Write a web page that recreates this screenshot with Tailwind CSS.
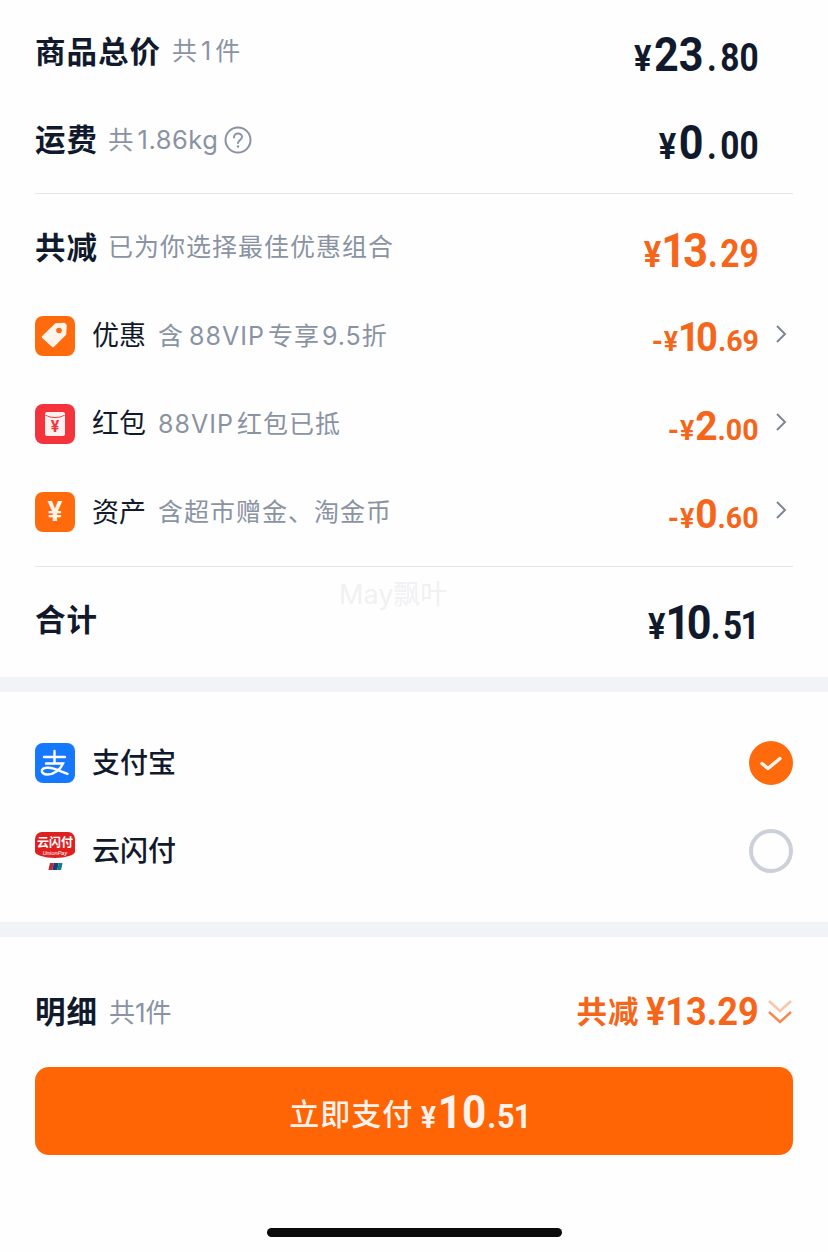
<!DOCTYPE html>
<html lang="zh">
<head>
<meta charset="utf-8">
<script src="https://cdn.jsdelivr.net/npm/@tailwindcss/browser@4"></script>
</head>
<body class="m-0 bg-[#fefefe]">
<div class="relative w-[828px] h-[1252px] overflow-hidden bg-[#fefefe] text-[#111a2c] font-['Inter','Noto_Sans_CJK_SC',sans-serif]">
  <div class="pt-2 px-[35px]">
    <div class="h-[88px] flex items-center justify-between">
      <div class="flex items-center"><span class="text-[30.5px] font-semibold tracking-[1px]">商品总价</span><span class="ml-[11px] text-[25px] text-[#8a93a3]">共<span class="mx-[4px]">1</span>件</span></div>
      <div class="pr-[34px] pt-[5px]"><div class="origin-right scale-x-[0.88] flex items-baseline font-['Roboto',sans-serif] font-bold leading-none"><span class="text-[37px] mr-[3px]">¥</span><span class="text-[49px]">23</span><span class="text-[38px] mx-1">.</span><span class="text-[38px]">80</span></div></div>
    </div>
    <div class="h-[88px] flex items-center justify-between">
      <div class="flex items-center"><span class="text-[30.5px] font-semibold tracking-[1px]">运费</span><span class="ml-[10px] text-[25.5px] text-[#8a93a3]">共<span class="ml-[4px] tracking-[0.5px]">1.86kg</span></span>
        <svg class="ml-[6px]" width="28" height="28" viewBox="0 0 28 28" fill="none" stroke="#8a93a3" stroke-width="2"><circle cx="14" cy="14" r="12.5"/><path d="M10 11.500c0-2.400 1.800-4 4-4s4 1.500 4 3.600c0 2.800-4 3-4 6" stroke-linecap="round"/><circle cx="14" cy="20.500" r="1.200" fill="#8a93a3" stroke="none"/></svg>
      </div>
      <div class="pr-[34px] pt-[5px]"><div class="origin-right scale-x-[0.88] flex items-baseline font-['Roboto',sans-serif] font-bold leading-none"><span class="text-[37px] mr-[3px]">¥</span><span class="text-[49px]">0</span><span class="text-[38px] mx-1">.</span><span class="text-[38px]">00</span></div></div>
    </div>
    <div class="mt-[9px] h-px bg-[#e4e6ea]"></div>
    <div class="mt-[10px] h-[88px] flex items-center justify-between">
      <div class="flex items-center"><span class="text-[30.5px] font-semibold tracking-[1px]">共减</span><span class="ml-[10px] text-[25px] tracking-[1px] text-[#8a93a3]">已为你选择最佳优惠组合</span></div>
      <div class="pr-[34px] pt-[5px]"><div class="origin-right scale-x-[0.88] flex items-baseline font-['Roboto',sans-serif] font-bold leading-none text-[#f5661a]"><span class="text-[37px]">¥</span><span class="text-[49px] tracking-[-3px]">13</span><span class="text-[38px] mx-[3px]">.</span><span class="text-[38px]">29</span></div></div>
    </div>

    <div class="h-[88px] flex items-center justify-between">
      <div class="flex items-center">
        <div class="w-10 h-10 rounded-lg bg-[#ff6a0c]">
          <svg width="40" height="40" viewBox="0 0 40 40"><path d="M21 8.500l8-.5 1.500 1.500-.5 8.500L18 30 8 21z" fill="#fff4ec" stroke="#fff4ec" stroke-width="2.500" stroke-linejoin="round"/><circle cx="24" cy="14.500" r="2.800" fill="#ff6a0c"/></svg>
        </div>
        <span class="ml-[17px] pt-[1px] text-[27px]">优惠</span><span class="ml-3 pt-[1px] text-[25px] tracking-[1px] text-[#8a93a3]">含<span class="ml-[5px] mr-[3px]">88VIP</span>专享<span class="ml-[2px]">9.5</span>折</span>
      </div>
      <div class="flex items-center">
        <div class="pt-[4px] origin-right scale-x-[0.95] flex items-baseline font-['Roboto',sans-serif] font-bold leading-none text-[#f5661a]"><span class="text-[30px] mr-[1px]">-</span><span class="text-[28px]">¥</span><span class="text-[40px] tracking-[-4px]">10</span><span class="text-[30px] ml-[4px]">.</span><span class="text-[30px]">69</span></div>
        <svg class="ml-[16px] mb-1" width="12" height="20" viewBox="0 0 12 20" fill="none" stroke="#7d8694" stroke-width="2"><path d="M2 2l8 8-8 8"/></svg><div class="w-[6px]"></div>
      </div>
    </div>
    <div class="h-[88px] flex items-center justify-between">
      <div class="flex items-center">
        <div class="w-10 h-10 rounded-lg bg-[#f5333c] flex items-center justify-center">
          <div class="relative w-5 h-6 rounded-[2px] bg-[#fdf1ef] flex items-end justify-center overflow-hidden">
            <div class="absolute top-[-9px] left-[-3px] w-[26px] h-[15px] rounded-b-[50%] border-b border-[#f5333c]"></div>
            <span class="text-[#f5333c] text-[16px] leading-[18px] font-bold font-['Roboto',sans-serif]">¥</span>
          </div>
        </div>
        <span class="ml-[17px] pt-[1px] text-[27px]">红包</span><span class="ml-3 pt-[1px] text-[25px] tracking-[1px] text-[#8a93a3]"><span class="mr-[3px]">88VIP</span>红包已抵</span>
      </div>
      <div class="flex items-center">
        <div class="pt-[4px] origin-right scale-x-[0.95] flex items-baseline font-['Roboto',sans-serif] font-bold leading-none text-[#f5661a]"><span class="text-[30px] mr-[1px]">-</span><span class="text-[28px] mr-[1px]">¥</span><span class="text-[41px]">2</span><span class="text-[30px]">.</span><span class="text-[30px]">00</span></div>
        <svg class="ml-[16px] mb-1" width="12" height="20" viewBox="0 0 12 20" fill="none" stroke="#7d8694" stroke-width="2"><path d="M2 2l8 8-8 8"/></svg><div class="w-[6px]"></div>
      </div>
    </div>
    <div class="h-[88px] flex items-center justify-between">
      <div class="flex items-center">
        <div class="w-10 h-10 rounded-lg bg-[#ff6a0c] flex items-center justify-center">
          <span class="text-[#fff4ec] text-[28px] leading-none font-bold font-['Roboto',sans-serif]">¥</span>
        </div>
        <span class="ml-[17px] pt-[2px] text-[27px]">资产</span><span class="ml-3 pt-[2px] text-[25px] tracking-[1px] text-[#8a93a3]">含超市赠金、淘金币</span>
      </div>
      <div class="flex items-center">
        <div class="pt-[4px] origin-right scale-x-[0.95] flex items-baseline font-['Roboto',sans-serif] font-bold leading-none text-[#f5661a]"><span class="text-[30px] mr-[1px]">-</span><span class="text-[28px] mr-[1px]">¥</span><span class="text-[41px]">0</span><span class="text-[30px]">.</span><span class="text-[30px]">60</span></div>
        <svg class="ml-[16px] mb-1" width="12" height="20" viewBox="0 0 12 20" fill="none" stroke="#7d8694" stroke-width="2"><path d="M2 2l8 8-8 8"/></svg><div class="w-[6px]"></div>
      </div>
    </div>
    <div class="mt-[10px] h-px bg-[#e4e6ea]"></div>
    <div class="mt-[9px] h-[88px] flex items-center justify-between">
      <span class="text-[30.5px] font-semibold tracking-[1px]">合计</span>
      <div class="pr-[34px] pt-[5px]"><div class="origin-right scale-x-[0.88] flex items-baseline font-['Roboto',sans-serif] font-bold leading-none"><span class="text-[37px]">¥</span><span class="text-[49px] tracking-[-4px]">10</span><span class="text-[38px] mx-[3px]">.</span><span class="text-[38px] tracking-[-2px] mr-[1px]">51</span></div></div>
    </div>
  </div>

  <div class="mt-[13px] h-[15px] bg-[#f1f3f6]"></div>

  <div class="pt-[27px] px-[35px]">
    <div class="h-[88px] flex items-center justify-between">
      <div class="flex items-center">
        <div class="w-10 h-10 rounded-lg bg-[#1677ff]">
          <svg width="40" height="40" viewBox="0 0 40 40" fill="none" stroke="#fff" stroke-width="2.400" stroke-linecap="round"><path d="M9 14h21M19.500 8v12M11 20.500h17c-2.500 6-9 11-15.500 11-4 0-6-2-5.500-4.200.7-3 7-3.300 12.500-1.500l13 5" /></svg>
        </div>
        <span class="ml-[17px] text-[28px] font-medium">支付宝</span>
      </div>
      <div class="w-11 h-11 rounded-full bg-[#ff6a0c] flex items-center justify-center">
        <svg width="24" height="24" viewBox="0 0 24 24" fill="none" stroke="#fff4ec" stroke-width="3.500" stroke-linecap="round" stroke-linejoin="round"><path d="M3 12.500l6 5 12-10"/></svg>
      </div>
    </div>
    <div class="h-[88px] flex items-center justify-between">
      <div class="flex items-center">
        <div class="relative w-10 h-10">
          <div class="h-[26px] mt-px rounded-t-[7px] rounded-b-[50%_25%] bg-[#e0201f] flex flex-col items-center pt-[4px] text-white leading-none">
            <span class="text-[12px] font-bold leading-[13px] whitespace-nowrap">云闪付</span>
            <span class="text-[6px] leading-[7px] font-['Roboto',sans-serif] italic">UnionPay</span>
          </div>
          <div class="absolute left-[14px] bottom-[1px] w-[13px] h-[7px] -skew-x-12 flex overflow-hidden">
            <div class="w-1/3 bg-[#c6272e]"></div><div class="w-1/3 bg-[#1c3f78]"></div><div class="w-1/3 bg-[#157b84]"></div>
          </div>
        </div>
        <span class="ml-[17px] text-[28px] font-medium">云闪付</span>
      </div>
      <div class="w-11 h-11 rounded-full border-[4px] border-[#ccd0d9]"></div>
    </div>
  </div>

  <div class="mt-[27px] h-[15px] bg-[#f1f3f6]"></div>

  <div class="pt-[31px] px-[35px]">
    <div class="h-[88px] flex items-center justify-between">
      <div class="flex items-center"><span class="text-[30.5px] font-semibold tracking-[1px]">明细</span><span class="ml-[11px] text-[26px] text-[#8a93a3]">共1件</span></div>
      <div class="flex items-center text-[#f5661a]">
        <span class="text-[30.5px] font-semibold tracking-[1px]">共减</span>
        <span class="ml-[1px] mr-[-2px] origin-right scale-x-[0.95] font-['Roboto',sans-serif] font-bold text-[38px] leading-none">¥13.29</span>
        <svg class="ml-[10px]" width="26" height="28" viewBox="0 0 26 28" fill="none" stroke-width="2.500"><path d="M2 3l11 10L24 3" stroke="#f8c5a8"/><path d="M2 14l11 10 11-10" stroke="#f58a50"/></svg>
      </div>
    </div>
    <div class="mt-[11px] h-[88px] rounded-[14px] bg-[#ff6505] flex items-center justify-center text-[#fdf3ec]">
      <span class="pt-[6px] text-[30px] font-medium tracking-[1px]">立即支付</span>
      <div class="ml-2 mr-[-4px] origin-left scale-x-[0.9] flex items-baseline font-['Roboto',sans-serif] font-bold leading-none"><span class="text-[31px] mr-[2px]">¥</span><span class="text-[47px]">10</span><span class="text-[34px] mx-[1px]">.</span><span class="text-[34px] tracking-[-1px]">51</span></div>
    </div>
  </div>

  <div class="absolute left-[267px] top-[1228px] w-[295px] h-[9px] rounded-full bg-[#0b0b0b]"></div>
  <div class="absolute left-[339px] top-[575px] text-[27px] text-[#f0f1f3] whitespace-nowrap">May飘叶</div>
</div>
</body>
</html>
